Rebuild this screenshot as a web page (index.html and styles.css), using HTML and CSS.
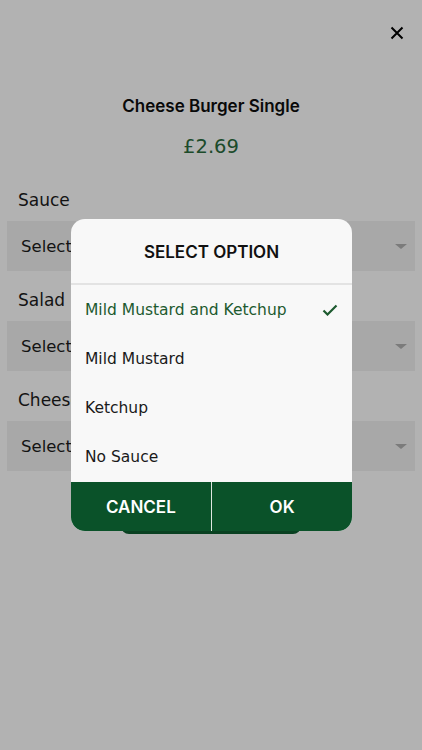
FILE: index.html
```html
<!DOCTYPE html>
<html>
<head>
<meta charset="utf-8">
<link rel="stylesheet" href="styles.css">
</head>
<body>
<div class="page">
  <div class="topbar">
    <button class="close" aria-label="Close">
      <svg width="14" height="14" viewBox="0 0 14 14"><path d="M1.5 1.5 L12.5 12.5 M12.5 1.5 L1.5 12.5" stroke="#000" stroke-width="2" fill="none"/></svg>
    </button>
  </div>
  <h1 class="title">Cheese Burger Single</h1>
  <div class="price">£2.69</div>
  <div class="fields">
    <div class="field">
      <div class="label">Sauce</div>
      <div class="select"><span>Select</span><i class="caret"></i></div>
    </div>
    <div class="field">
      <div class="label">Salad</div>
      <div class="select"><span>Select</span><i class="caret"></i></div>
    </div>
    <div class="field">
      <div class="label">Cheese</div>
      <div class="select"><span>Select</span><i class="caret"></i></div>
    </div>
  </div>
  <div class="addwrap"><button class="add" aria-label="Add to basket"></button></div>
</div>
<div class="overlay"></div>
<div class="dialog">
  <div class="dlg-head">SELECT OPTION</div>
  <ul class="options">
    <li class="opt selected"><span>Mild Mustard and Ketchup</span>
      <svg class="check" width="16" height="12" viewBox="0 0 16 12"><path d="M1.5 6.5 L5.5 10.5 L14.5 1.5" stroke="#1d5a2f" stroke-width="2.2" fill="none"/></svg>
    </li>
    <li class="opt"><span>Mild Mustard</span></li>
    <li class="opt"><span>Ketchup</span></li>
    <li class="opt"><span>No Sauce</span></li>
  </ul>
  <div class="dlg-actions">
    <button class="act">CANCEL</button>
    <button class="act">OK</button>
  </div>
</div>
</body>
</html>
```

FILE: styles.css
```css
* { box-sizing: border-box; }
html, body { margin: 0; padding: 0; }
body {
  width: 422px;
  height: 750px;
  background: #ffffff;
  font-family: "DejaVu Sans", sans-serif;
  color: #111;
  position: relative;
  overflow: hidden;
}
.topbar {
  display: flex;
  justify-content: flex-end;
  height: 66px;
  padding: 19px 11px 0 0;
}
.close {
  width: 28px; height: 28px;
  background: none; border: 0; padding: 0;
  display: flex; align-items: center; justify-content: center;
}
.title {
  margin: 0;
  text-align: center;
  font-family: "Inter", "DejaVu Sans", sans-serif;
  font-size: 17px;
  font-weight: 600;
  line-height: 24px;
  margin-top: 28px;
  color: #0d0d0d;
}
.price {
  text-align: center;
  font-size: 19.5px;
  line-height: 28px;
  margin-top: 15px;
  color: #2a6c3d;
}
.fields {
  display: flex;
  flex-direction: column;
  gap: 17px;
  margin-top: 27px;
}
.label {
  font-size: 17px;
  line-height: 24px;
  padding-left: 18px;
  margin-bottom: 9px;
  color: #1c1c1c;
}
.select {
  margin: 0 7px;
  height: 50px;
  background: #f1f1f1;
  display: flex;
  align-items: center;
  justify-content: space-between;
  padding: 0 8px 0 14px;
  font-size: 16.5px;
  color: #1c1c1c;
}
.caret {
  width: 0; height: 0;
  border-left: 6px solid transparent;
  border-right: 6px solid transparent;
  border-top: 5px solid #b0b0b0;
}
.addwrap { display: flex; justify-content: center; margin-top: 13px; }
.add {
  width: 180px; height: 50px;
  border: 0; border-radius: 8px;
  background: #0e5d30;
}
.overlay {
  position: absolute; inset: 0;
  background: rgba(0,0,0,0.3);
}
.dialog {
  position: absolute;
  left: 71px; top: 219px;
  width: 281px;
  background: #f8f8f8;
  border-radius: 14px;
  overflow: hidden;
}
.dlg-head {
  height: 66px;
  display: flex; align-items: center; justify-content: center;
  font-family: "Inter", "DejaVu Sans", sans-serif;
  font-size: 17px;
  font-weight: 600;
  color: #111;
  border-bottom: 2px solid #e3e3e3;
  padding-top: 1px;
}
.options { list-style: none; margin: 0; padding: 0; }
.opt {
  height: 49.25px;
  display: flex; align-items: center; justify-content: space-between;
  padding: 0 14px 0 14px;
  font-size: 15.5px;
  color: #1a1a1a;
}
.opt.selected { color: #1d5a2f; }
.dlg-actions {
  display: grid;
  grid-template-columns: 1fr 1fr;
  gap: 1.5px;
  background: #dfe6e1;
  height: 49px;
}
.act {
  border: 0;
  background: #0a5229;
  color: #fff;
  font-family: "Inter", "DejaVu Sans", sans-serif;
  font-size: 17px;
  font-weight: 600;
}
```
